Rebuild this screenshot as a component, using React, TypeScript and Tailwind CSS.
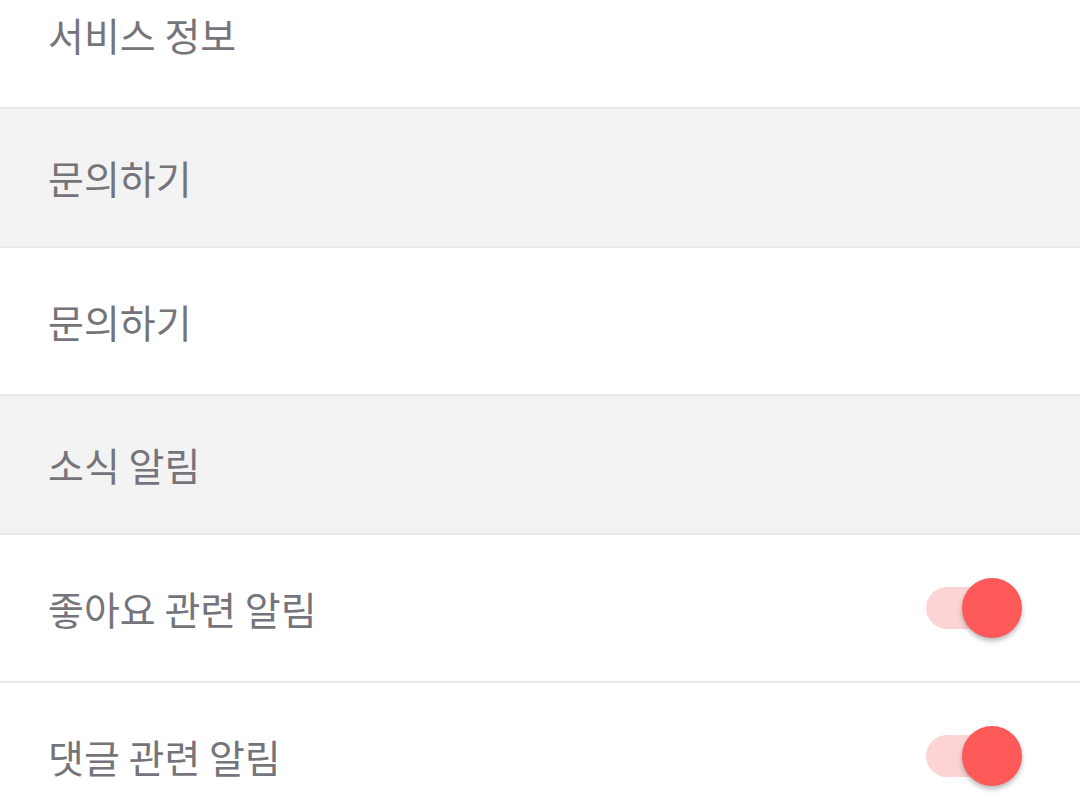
import { useState } from 'react'

type Row =
  | { kind: 'item'; label: string; toggle?: boolean }
  | { kind: 'header'; label: string }

const rows: Row[] = [
  { kind: 'item', label: '서비스 정보' },
  { kind: 'header', label: '문의하기' },
  { kind: 'item', label: '문의하기' },
  { kind: 'header', label: '소식 알림' },
  { kind: 'item', label: '좋아요 관련 알림', toggle: true },
  { kind: 'item', label: '댓글 관련 알림', toggle: true },
]

function Toggle({ on, onChange }: { on: boolean; onChange: () => void }) {
  return (
    <button
      type="button"
      onClick={onChange}
      className="relative w-[96px] h-[62px] flex items-center"
    >
      <span className={on ? 'w-[84px] h-[42px] rounded-full bg-[#fdd4d5]' : 'w-[84px] h-[42px] rounded-full bg-[#d8d8d8]'} />
      <span
        className={
          on
            ? 'absolute left-[36px] top-[1px] w-[60px] h-[60px] rounded-full bg-[#fe5959] shadow-[0_3px_5px_rgba(0,0,0,0.28)]'
            : 'absolute left-0 top-[1px] w-[60px] h-[60px] rounded-full bg-[#f5f5f5] shadow-[0_3px_5px_rgba(0,0,0,0.28)]'
        }
      />
    </button>
  )
}

export default function App() {
  const [toggles, setToggles] = useState<Record<string, boolean>>({
    '좋아요 관련 알림': true,
    '댓글 관련 알림': true,
  })

  return (
    <div
      className="w-[1080px] h-[810px] overflow-hidden bg-white text-[#76747b]"
      style={{ fontFamily: '"Noto Sans CJK KR", "Noto Sans", sans-serif' }}
    >
      <div className="mt-[-39px] flex flex-col">
        {rows.map((row, i) =>
          row.kind === 'header' ? (
            <div
              key={i}
              className="h-[139px] shrink-0 flex items-center pl-[48px] bg-[#f3f3f3] border-b-2 border-[#e8e8e8] text-[39px]"
            >
              {row.label}
            </div>
          ) : (
            <div
              key={i}
              className="h-[148px] shrink-0 flex items-center justify-between pl-[48px] pr-[58px] bg-white border-b-2 border-[#e8e8e8] text-[39px]"
            >
              <span>{row.label}</span>
              {row.toggle && (
                <Toggle
                  on={toggles[row.label]}
                  onChange={() => setToggles((t) => ({ ...t, [row.label]: !t[row.label] }))}
                />
              )}
            </div>
          )
        )}
      </div>
    </div>
  )
}
